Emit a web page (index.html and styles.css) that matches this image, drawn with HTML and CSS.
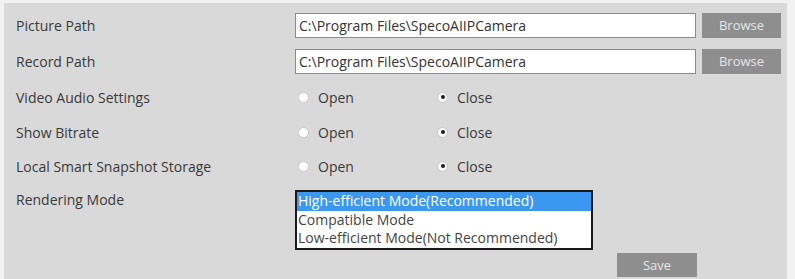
FILE: index.html
```html
<html>
<head>
  <link rel="stylesheet" href="styles.css">
</head>
<body>
<div class="panel">
  <div class="row">
    <div class="label">Picture Path</div>
    <div class="field">
      <input class="path" type="text" value="C:\Program Files\SpecoAIIPCamera">
      <button class="button browse">Browse</button>
    </div>
  </div>
  <div class="row">
    <div class="label">Record Path</div>
    <div class="field">
      <input class="path" type="text" value="C:\Program Files\SpecoAIIPCamera">
      <button class="button browse">Browse</button>
    </div>
  </div>
  <div class="row">
    <div class="label">Video Audio Settings</div>
    <div class="field">
      <span class="radio"><span class="dot"></span>Open</span>
      <span class="radio checked"><span class="dot"></span>Close</span>
    </div>
  </div>
  <div class="row short">
    <div class="label">Show Bitrate</div>
    <div class="field">
      <span class="radio"><span class="dot"></span>Open</span>
      <span class="radio checked"><span class="dot"></span>Close</span>
    </div>
  </div>
  <div class="row short">
    <div class="label">Local Smart Snapshot Storage</div>
    <div class="field">
      <span class="radio"><span class="dot"></span>Open</span>
      <span class="radio checked"><span class="dot"></span>Close</span>
    </div>
  </div>
  <div class="row top">
    <div class="label">Rendering Mode</div>
    <div class="field">
      <div class="listbox">
        <div class="option selected">High-efficient Mode(Recommended)</div>
        <div class="option">Compatible Mode</div>
        <div class="option">Low-efficient Mode(Not Recommended)</div>
      </div>
    </div>
  </div>
  <div class="actions">
    <button class="button save">Save</button>
  </div>
</div>
</body>
</html>
```

FILE: styles.css
```css
body {
  margin: 0;
  background: #f2f2f2;
  font-family: "Open Sans", "Liberation Sans", sans-serif;
  font-size: 14px;
  color: #3a3a3a;
}
.panel {
  margin: 3px 8px 0 4px;
  height: 276px;
  padding: 4px 8px 0 12px;
  box-sizing: border-box;
  background: #d9d9d9;
}
.row {
  display: flex;
  align-items: center;
  height: 36px;
}
.row.short {
  height: 34px;
}
.row.top {
  align-items: flex-start;
  margin-top: 7px;
  height: 63px;
}
.row.top .label {
  line-height: 20px;
}
.label {
  width: 279px;
  flex: none;
}
.field {
  display: flex;
  align-items: center;
}
.path {
  width: 401px;
  height: 25px;
  margin: 0;
  padding: 0 3px;
  box-sizing: border-box;
  border: 1px solid #8a8a8a;
  background: #fff;
  font-family: inherit;
  font-size: 14px;
  color: #333;
}
.button {
  border: none;
  background: #8e8e8e;
  color: #e6e6e6;
  font-family: inherit;
  font-size: 13px;
  padding: 0;
}
.browse {
  width: 79px;
  height: 25px;
  margin-left: 6px;
}
.radio {
  display: flex;
  align-items: center;
  width: 136px;
  padding-left: 3px;
}
.dot {
  width: 11px;
  height: 11px;
  margin-right: 9px;
  border: 1px solid #c8c8c8;
  border-radius: 50%;
  background: #fff;
  box-sizing: border-box;
  position: relative;
}
.radio.checked .dot {
  background: #f7f7f7;
}
.radio.checked .dot::after {
  content: "";
  position: absolute;
  left: 2.5px;
  top: 2.5px;
  width: 4px;
  height: 4px;
  border-radius: 50%;
  background: #1e1e1e;
}
.listbox {
  width: 294px;
  border: 2px solid #1a1a1a;
  background: #fff;
  font-size: 14px;
}
.option {
  height: 18.5px;
  line-height: 18.5px;
  padding-left: 1px;
  color: #444;
  white-space: nowrap;
}
.option.selected {
  background: #3b97f0;
  color: #fff;
}
.actions {
  display: flex;
  padding-left: 601px;
}
.save {
  width: 80px;
  height: 24px;
}
```
